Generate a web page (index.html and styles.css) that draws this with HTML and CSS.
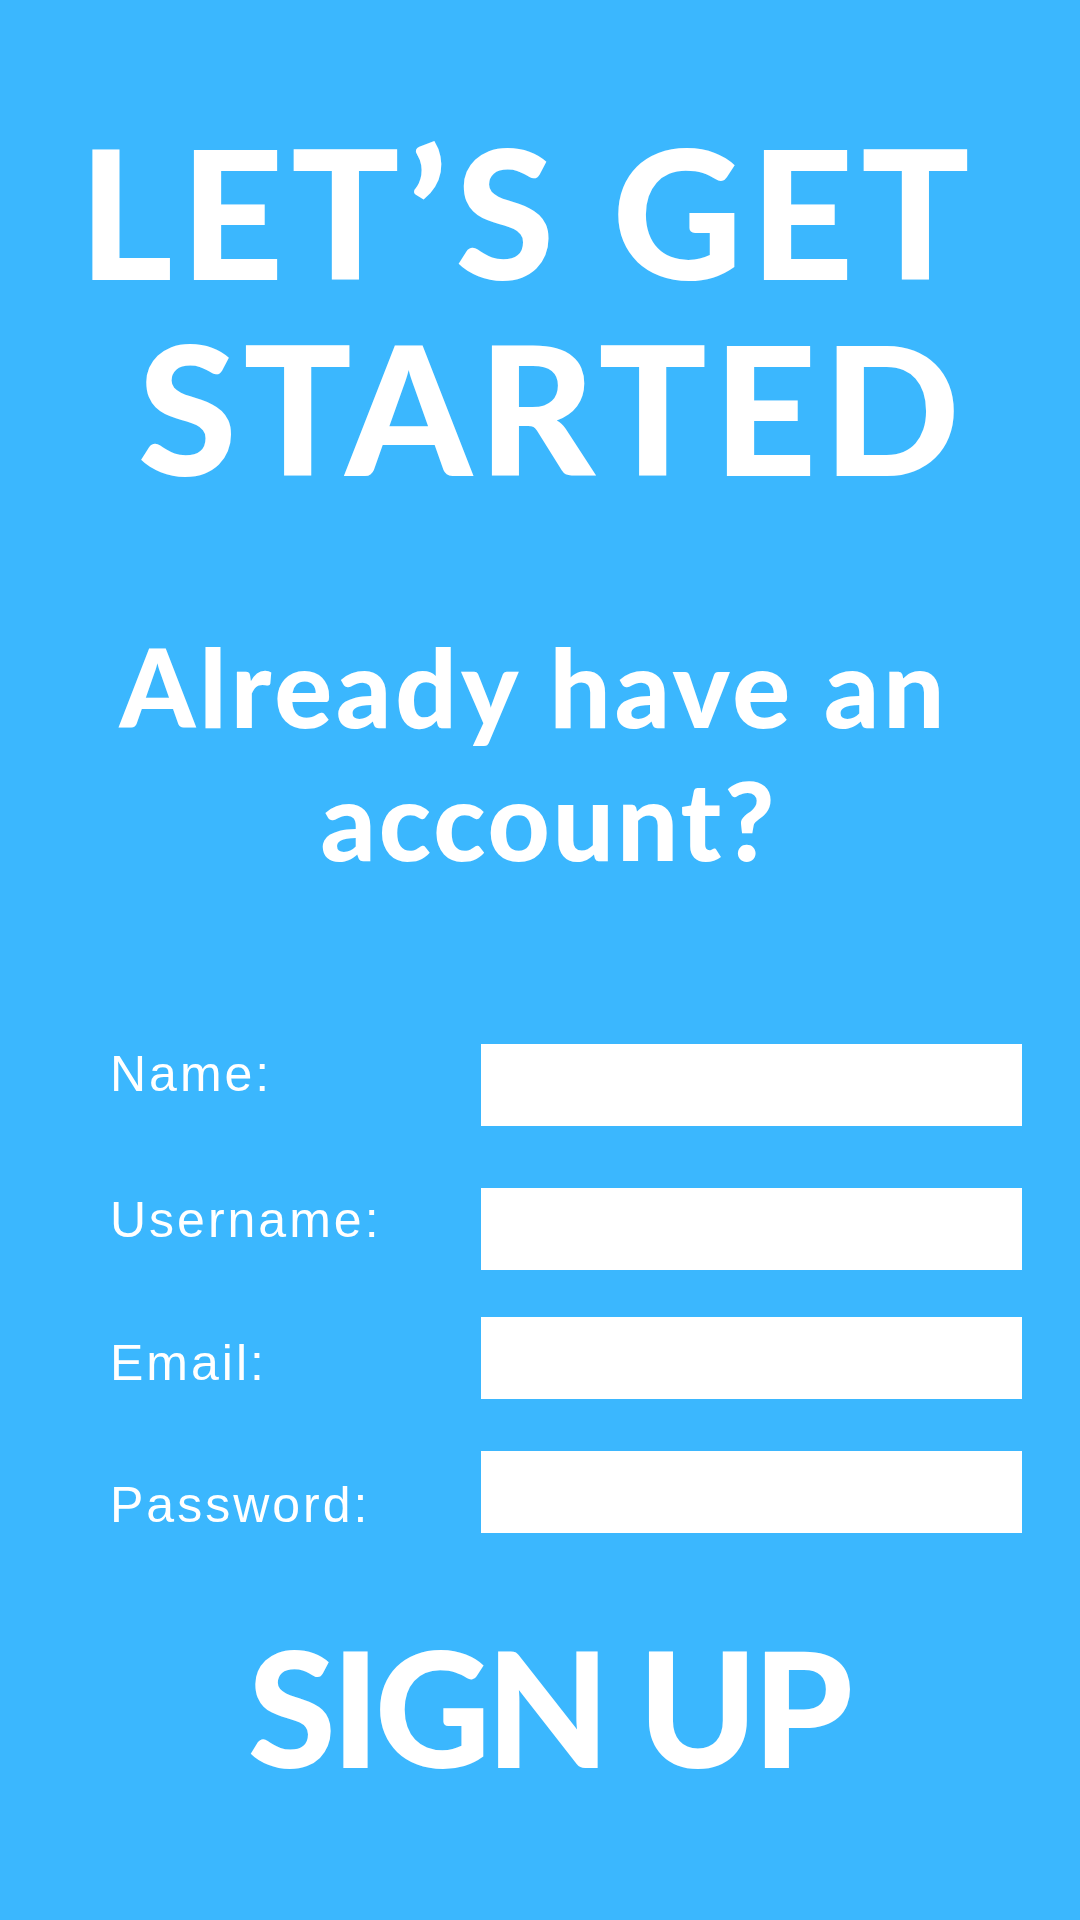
FILE: index.html
```html
<!DOCTYPE html>
<html lang="en">
<head>
<meta charset="utf-8">
<title>Let's Get Started</title>
<link rel="stylesheet" href="styles.css">
</head>
<body>
<main class="page">
  <h1 class="title"><span class="line t1">LET’S GET</span><span class="line t2">STARTED</span></h1>
  <h2 class="subtitle"><span class="line s1">Already have an</span><span class="line s2">account?</span></h2>
  <form class="form">
    <div class="row row-name">
      <label class="label">Name:</label>
      <div class="field"></div>
    </div>
    <div class="row row-user">
      <label class="label">Username:</label>
      <div class="field"></div>
    </div>
    <div class="row row-email">
      <label class="label">Email:</label>
      <div class="field"></div>
    </div>
    <div class="row row-pass">
      <label class="label">Password:</label>
      <div class="field"></div>
    </div>
  </form>
  <div class="signup">SIGN UP</div>
</main>
</body>
</html>
```

FILE: styles.css
```css
html, body {
  margin: 0;
  padding: 0;
  background: #3bb7fe;
}
.page {
  width: 1080px;
  height: 1920px;
  background: #3bb7fe;
  color: #ffffff;
  display: flex;
  flex-direction: column;
  align-items: center;
  overflow: hidden;
}
.line {
  display: block;
  white-space: nowrap;
}
.title {
  margin: 112px 0 0 0;
  font-family: Lato, "Liberation Sans", sans-serif;
  font-weight: 900;
  font-size: 180px;
  line-height: 196px;
  letter-spacing: 0.035em;
  text-align: center;
}
.t1 { padding-right: 24px; letter-spacing: 0.042em; }
.t2 { padding-left: 24px; }
.subtitle {
  margin: 116px 0 0 0;
  font-family: Lato, "Liberation Sans", sans-serif;
  font-weight: 900;
  font-size: 108px;
  line-height: 133px;
  letter-spacing: 4px;
  text-align: center;
}
.s1 { padding-right: 12px; }
.s2 { padding-left: 18px; letter-spacing: 3px; }
.form {
  margin-top: 158px;
  width: 1080px;
  display: flex;
  flex-direction: column;
}
.row {
  display: flex;
  align-items: flex-start;
  padding-left: 110px;
}
.row-user { margin-top: 62px; }
.row-email { margin-top: 47px; }
.row-pass { margin-top: 52px; }
.label {
  width: 371px;
  font-family: "Liberation Sans", Arial, sans-serif;
  font-size: 50px;
  line-height: 50px;
  letter-spacing: 3px;
  color: #ffffff;
}
.row-name .label { margin-top: 5px; }
.row-user .label { margin-top: 7px; }
.row-email .label { margin-top: 21px; }
.row-pass .label { margin-top: 29px; }
.field {
  width: 541px;
  height: 82px;
  background: #ffffff;
}
.signup {
  margin-top: 93px;
  padding-left: 16px;
  font-family: Lato, "Liberation Sans", sans-serif;
  font-weight: 900;
  font-size: 160px;
  line-height: 160px;
  letter-spacing: -0.03em;
  text-align: center;
}
```
